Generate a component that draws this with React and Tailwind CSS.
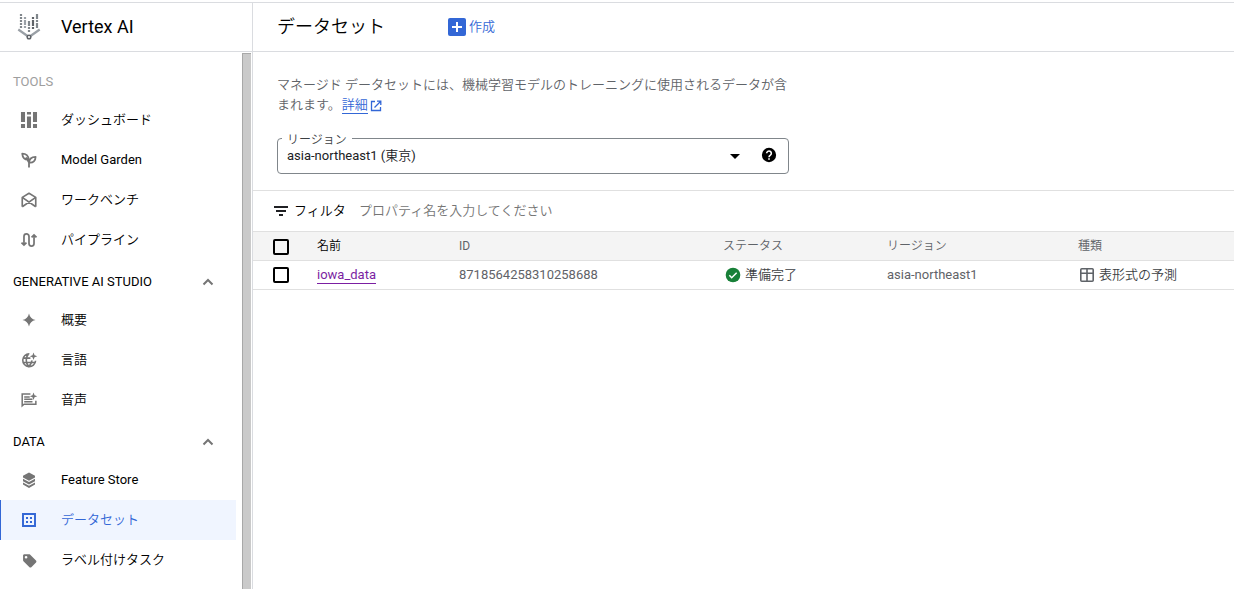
import React from 'react';

const Icon = ({ size = 18, className = '', children }) => (
  <svg width={size} height={size} viewBox="0 0 24 24" fill="currentColor" className={`shrink-0 ${className}`}>
    {children}
  </svg>
);

const icons = {
  dashboard: (
    <path d="M1.300 1.300h5.400v13.400H1.300zM1.300 17.300h5.400v5.400H1.300zM9.300 1.300h5.400v3.400H9.300zM9.300 7.300h5.400v15.400H9.300zM17.300 1.300h5.400v13.400h-5.400zM17.300 17.300h5.400v5.400h-5.400z" />
  ),
  garden: (
    <g fill="none" stroke="currentColor" strokeWidth="2.400" strokeLinejoin="round">
      <path d="M12 22v-7M11.300 11.300C6.500 12 3.300 9 3 3.500c5 0 8.500 3 8.300 7.800zM12.300 15.500C12 11 15 7.800 20.800 7.800c0 5-3.300 8.500-8.500 7.700zM12 15.500L8 8.500" />
    </g>
  ),
  workbench: (
    <g fill="none" stroke="currentColor" strokeWidth="2.200" strokeLinejoin="round">
      <path d="M3 21V8.500L12 3l9 5.500V21M3 8.500L21 21M21 8.500L3 21" />
    </g>
  ),
  pipeline: (
    <g fill="none" stroke="currentColor" strokeWidth="2.300">
      <path d="M2 15.500l3.300 3.300 3.300-3.300M5.300 18.500V7.200a3.300 3.300 0 0 1 6.700 0v9.600a3.300 3.300 0 0 0 6.700 0V5.500M15.400 8.500l3.300-3.300L22 8.500" />
    </g>
  ),
  spark: <path d="M12 3.300c1.200 5 3.700 7.500 8.700 8.700-5 1.200-7.500 3.700-8.700 8.700-1.200-5-3.700-7.500-8.700-8.700 5-1.200 7.500-3.700 8.700-8.700z" />,
  language: (
    <g transform="translate(1 1) scale(.92)">
      <g fill="none" stroke="currentColor" strokeWidth="2.300">
        <path d="M12.500 3A9.300 9.300 0 1 0 21.500 13M3.500 9.300H14M3 15.500h18M11.500 3c-4.700 5.500-4.700 13 0 18.500 3.500-3.500 4.800-6 4.500-9" />
      </g>
      <path d="M18.500 1l1.500 4 4 1.500-4 1.500-1.500 4L17 8l-4-1.500L17 5z" />
    </g>
  ),
  speech: (
    <g transform="translate(1 1) scale(.92)">
      <path d="M1 2h13v2.200H3.200v14L4.500 17h16.300v-4H23v6.200H5L1 23zM5 6.500h8v2.200H5zM5 9.800h12V12H5zM5 13.300h12v2.200H5z" />
      <path d="M18.500 1l1.500 4 4 1.500-4 1.500-1.500 4L17 8l-4-1.500L17 5z" />
    </g>
  ),
  store: (
    <path d="M12 2l8 4.300v2.200L12 13 4 8.500V6.300zM4 10.200l8 4.500 8-4.500v3.300L12 18l-8-4.500zM4 15.200l8 4.500 8-4.500v2.800L12 22.500 4 18z" />
  ),
  dataset: (
    <path
      fillRule="evenodd"
      d="M2.700 2.700h18.600v18.600H2.700zM5.300 5.300v13.400h13.400V5.300zM8 8h2.700v2.700H8zM13.300 8H16v2.700h-2.700zM8 13.300h2.700V16H8zM13.300 13.300H16V16h-2.700z"
    />
  ),
  label: (
    <path
      transform="translate(2.300 2.500) scale(.89)"
      d="M21.400 11.600l-9-9C12.100 2.200 11.600 2 11 2H4c-1.100 0-2 .9-2 2v7c0 .6.200 1.100.6 1.400l9 9c.4.400.9.600 1.400.6s1-.2 1.400-.6l7-7c.4-.4.600-.9.600-1.400s-.2-1.100-.6-1.400zM6.500 8.500a2 2 0 1 1 0-4 2 2 0 0 1 0 4z"
    />
  ),
};

const sections = [
  {
    items: [
      { icon: 'dashboard', label: 'ダッシュボード' },
      { icon: 'garden', label: 'Model Garden' },
      { icon: 'workbench', label: 'ワークベンチ' },
      { icon: 'pipeline', label: 'パイプライン' },
    ],
  },
  {
    title: 'GENERATIVE AI STUDIO',
    items: [
      { icon: 'spark', label: '概要' },
      { icon: 'language', label: '言語' },
      { icon: 'speech', label: '音声' },
    ],
  },
  {
    title: 'DATA',
    items: [
      { icon: 'store', label: 'Feature Store' },
      { icon: 'dataset', label: 'データセット', active: true },
      { icon: 'label', label: 'ラベル付けタスク' },
    ],
  },
];

const VertexLogo = () => (
  <svg width="24" height="28" viewBox="0 0 24 28" fill="none" className="shrink-0">
    <g strokeWidth="2.200">
      <path d="M4 1v14" stroke="#80868b" strokeDasharray="2 1" />
      <path d="M8 4v2M8 7v8" stroke="#9aa0a6" strokeDasharray="5 1" />
      <path d="M12 8v11" stroke="#80868b" strokeDasharray="5 1 2 1" />
      <path d="M16 4v12" stroke="#5f6368" strokeDasharray="2 1 6 1" />
      <path d="M20 1v14" stroke="#80868b" strokeDasharray="5 1 2 1" />
    </g>
    <path d="M1.300 16.500L10.500 23M22.700 16.500L13.500 23" stroke="#9aa0a6" strokeWidth="2.200" />
    <circle cx="12" cy="24" r="1.800" fill="#fff" stroke="#5f6368" strokeWidth="1.500" />
  </svg>
);

const NavItem = ({ item }) => (
  <div
    className={`flex h-10 w-[236px] items-center border-l ${
      item.active ? 'border-[#3367d6] bg-[#f0f5ff] text-[#3367d6]' : 'border-transparent text-black'
    }`}
  >
    <Icon className={`ml-[19px] mr-[23px] ${item.active ? 'text-[#3367d6]' : 'text-[#757575]'}`}>
      {icons[item.icon]}
    </Icon>
    <span>{item.label}</span>
  </div>
);

const Sidebar = () => (
  <nav className="flex w-[253px] shrink-0 border-r border-[#dadce0]">
    <div className="w-[242px] shrink-0">
      <div className="h-12 pl-[13px] pt-5 leading-5 text-[#9e9e9e]">TOOLS</div>
      {sections.map((section, i) => (
        <div key={i}>
          {section.title && (
            <div className="flex h-10 items-center justify-between pl-[13px] pr-[28px]">
              <span className="mt-1">{section.title}</span>
              <svg width="12" height="8" viewBox="0 0 12 8" fill="none" stroke="#757575" strokeWidth="2" className="mt-1">
                <path d="M1.500 6.500L6 2l4.500 4.500" />
              </svg>
            </div>
          )}
          {section.items.map((item) => (
            <NavItem key={item.label} item={item} />
          ))}
        </div>
      ))}
    </div>
    {/* Scrollbar */}
    <div className="mt-px w-[9px] border-l border-t border-[#a8a8a8] bg-[#cacaca]"></div>
  </nav>
);

const Checkbox = () => <div className="size-4 rounded-[2px] border-2 border-black"></div>;

const RegionSelect = () => (
  <div className="relative mt-[23px] flex h-9 w-[512px] items-center rounded-[4px] border border-[#80868b] pl-[9px] pr-[11px]">
    <span className="absolute -top-[7px] left-1 bg-white px-[5px] text-[12px] leading-4 text-[#3c4043]">リージョン</span>
    <span className="flex-1 text-[#202124]">asia-northeast1 (東京)</span>
    <svg width="10" height="5" viewBox="0 0 10 5" className="mr-[21px]">
      <path d="M0 0h10L5 5z" />
    </svg>
    <Icon size={16} className="-mt-0.5 text-black">
      <circle cx="12" cy="12" r="10.700" />
      <path d="M8.500 9.500a3.500 3.500 0 1 1 5.600 2.800c-1.300.9-2.100 1.500-2.100 3" fill="none" stroke="#fff" strokeWidth="2.400" />
      <path d="M10.800 16.800h2.400v2.200h-2.400z" fill="#fff" />
    </Icon>
  </div>
);

const columns = 'grid grid-cols-[64px_142px_264px_164px_191px_1fr] items-center';

const DatasetTable = () => (
  <div>
    <div className={`${columns} h-[29px] border-b border-[#e0e0e0] bg-[#f4f4f4] text-[12px] text-[#5f6368]`}>
      <div className="pl-5 pt-0.5"><Checkbox /></div>
      <div className="text-black">名前</div>
      <div>ID</div>
      <div>ステータス</div>
      <div>リージョン</div>
      <div>種類</div>
    </div>
    <div className={`${columns} h-[29px] border-b border-[#e0e0e0] text-[#5f6368]`}>
      <div className="pl-5"><Checkbox /></div>
      <div>
        <span className="inline-block border-b border-[#7b1fa2] leading-4 text-[#7b1fa2]">iowa_data</span>
      </div>
      <div>8718564258310258688</div>
      <div className="flex items-center gap-1 pl-0.5">
        <Icon size={16} className="text-[#188038]">
          <circle cx="12" cy="12" r="11" />
          <path d="M6.500 12.500l3.500 3.500 7.500-7.500" fill="none" stroke="#fff" strokeWidth="2.200" />
        </Icon>
        <span className="text-[#3c4043]">準備完了</span>
      </div>
      <div>asia-northeast1</div>
      <div className="flex items-center gap-[5px] pl-0.5">
        <svg width="14" height="14" viewBox="0 0 14 14" fill="none" stroke="#5f6368" strokeWidth="1.600">
          <rect x=".8" y=".8" width="12.400" height="12.400" rx="1" />
          <path d="M1 5.200h12M7 1v12" />
        </svg>
        <span className="text-[#3c4043]">表形式の予測</span>
      </div>
    </div>
  </div>
);

const App = () => {
  return (
    <div className="flex h-[589px] w-[1234px] flex-col overflow-hidden bg-white pt-0.5 font-['Roboto','Noto_Sans_CJK_JP_DemiLight','Noto_Sans_CJK_JP_Light','Noto_Sans_CJK_JP',sans-serif] text-[13px] leading-5 text-black">
      {/* Header */}
      <header className="flex h-[50px] shrink-0 border-y border-[#dadce0]">
        <div className="flex w-[253px] items-center border-r border-[#dadce0] pl-[17px]">
          <VertexLogo />
          <span className="ml-5 text-[18px]">Vertex AI</span>
        </div>
        <div className="flex items-center pl-6">
          <h1 className="w-[171px] text-[18px]">データセット</h1>
          <button className="flex items-center gap-[3px] text-[#3367d6]">
            <svg width="18" height="18" viewBox="0 0 18 18">
              <rect width="18" height="18" rx="2" fill="#3367d6" />
              <path d="M9 4v10M4 9h10" stroke="#fff" strokeWidth="2" />
            </svg>
            作成
          </button>
        </div>
      </header>

      <div className="flex min-h-0 flex-1">
        <Sidebar />
        <main className="min-w-0 flex-1">
          <div className="h-[139px] border-b border-[#e0e0e0] pl-6 pt-[23px]">
            <p className="text-[#5f6368]">
              マネージド データセットには、機械学習モデルのトレーニングに使用されるデータが含
              <br />
              まれます。
              <a className="ml-px inline-block border-b border-[#3367d6] leading-4 text-[#3367d6]">詳細</a>
              <svg width="12" height="12" viewBox="0 0 12 12" fill="none" stroke="#3367d6" strokeWidth="1.300" className="ml-0.5 inline-block">
                <path d="M5 1.500H1.500v9h9V7M7 1.200h3.800V5M10.500 1.500L4.500 7.500" />
              </svg>
            </p>
            <RegionSelect />
          </div>
          {/* Filter bar */}
          <div className="flex h-[41px] items-center border-b border-[#e0e0e0] pl-[21px]">
            <svg width="14" height="10" viewBox="0 0 14 10" fill="#202124">
              <path d="M0 0h14v2H0zM2 4h10v2H2zM5 8h4v2H5z" />
            </svg>
            <span className="ml-[6px] w-[65px]">フィルタ</span>
            <span className="text-[#757575]">プロパティ名を入力してください</span>
          </div>
          <DatasetTable />
        </main>
      </div>
    </div>
  );
};

export default App;
